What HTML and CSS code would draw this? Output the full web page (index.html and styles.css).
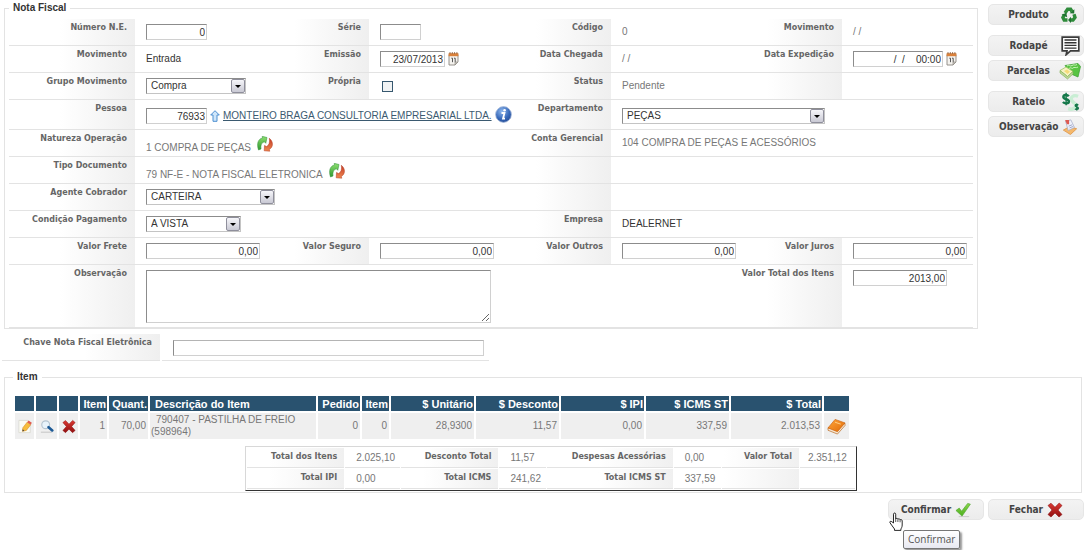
FILE: index.html
```html
<!DOCTYPE html>
<html lang="pt-BR">
<head>
<meta charset="utf-8">
<title>Nota Fiscal</title>
<link rel="stylesheet" href="styles.css">
</head>
<body>
<svg class="defs" aria-hidden="true">
  <defs>
    <linearGradient id="gGreen" x1="0" y1="0" x2="0" y2="1"><stop offset="0" stop-color="#8ee071"/><stop offset="1" stop-color="#2f9a2f"/></linearGradient>
    <linearGradient id="gRed" x1="0" y1="0" x2="0" y2="1"><stop offset="0" stop-color="#c33a26"/><stop offset="1" stop-color="#f08a52"/></linearGradient>
    <linearGradient id="gCross" x1="0" y1="0" x2="0" y2="1"><stop offset="0" stop-color="#dd3a34"/><stop offset="1" stop-color="#8f0f10"/></linearGradient>
    <linearGradient id="gCheck" x1="0" y1="0" x2="0" y2="1"><stop offset="0" stop-color="#8ad84a"/><stop offset="1" stop-color="#4cae1e"/></linearGradient>
    <radialGradient id="gInfo" cx="0.4" cy="0.3" r="0.8"><stop offset="0" stop-color="#8fb8ee"/><stop offset="0.6" stop-color="#3567b8"/><stop offset="1" stop-color="#23468e"/></radialGradient>
    <linearGradient id="gBook" x1="0" y1="0" x2="1" y2="1"><stop offset="0" stop-color="#ffa53a"/><stop offset="1" stop-color="#e06a08"/></linearGradient>
    <symbol id="refresh" viewBox="0 0 16 16">
      <path d="M1.500 14C-.5 8 .8 3 5.500 2L5.200.3 10 1.500 8.800 7.300 7.300 5.800C4.500 6.300 3.500 9.500 4 13z" fill="url(#gGreen)" stroke="#2c8a35" stroke-width=".5"/>
      <path d="M12.300 2.300C16.500 5.500 16.500 11 12.300 13.300L12.800 15.200 7.200 14.800 7.500 9.400 9.500 10.600C12.300 9.300 13 6 12.300 2.300z" fill="url(#gRed)" stroke="#b03a20" stroke-width=".5"/>
    </symbol>
    <symbol id="calendar" viewBox="0 0 11 14">
      <path d="M1 2.500h9v7L7 13H1z" fill="#f4f2ee" stroke="#8b8780" stroke-width=".9"/>
      <path d="M.6 1.200h9.800v3H.6z" fill="#d9803a"/>
      <path d="M2 0v2M4.300 0v2M6.600 0v2M8.900 0v2" stroke="#8a5a3a" stroke-width=".8"/>
      <path d="M3.300 6.200h1.200v4M6 6.200h1.200v4" fill="none" stroke="#444" stroke-width=".9"/>
      <path d="M7 13V10h3z" fill="#c8c4bc" stroke="#8b8780" stroke-width=".6"/>
    </symbol>
    <symbol id="cross" viewBox="0 0 16 16">
      <path d="M1 3.500 4 1.200 8 5.300 12.200 1 15 3.500 11 8 15 12.500 12 15 8 11 4 15 1 12.500 5 8z" fill="url(#gCross)" stroke="#8f1414" stroke-width=".6" stroke-linejoin="round"/>
    </symbol>
  </defs>
</svg>

<div class="top">
  <main class="main">
    <fieldset class="panel">
      <legend>Nota Fiscal</legend>
      <div class="row">
        <label class="lbl" for="numero">Número N.E.</label>
        <div class="val"><input class="num w61" id="numero" value="0"></div>
        <label class="lbl" for="serie">Série</label>
        <div class="val"><input class="w40" id="serie"></div>
        <span class="lbl">Código</span><span class="val ro">0</span>
        <span class="lbl">Movimento</span><span class="val ro">/ /</span>
      </div>
      <div class="row">
        <span class="lbl">Movimento</span><span class="val">Entrada</span>
        <label class="lbl" for="emissao">Emissão</label>
        <div class="val"><input class="num w65" id="emissao" value="23/07/2013"><svg class="cal"><use href="#calendar"/></svg></div>
        <span class="lbl">Data Chegada</span><span class="val ro">/ /</span>
        <label class="lbl" for="expedicao">Data Expedição</label>
        <div class="val"><input class="num w90" id="expedicao" value="/  /    00:00"><svg class="cal"><use href="#calendar"/></svg></div>
      </div>
      <div class="row">
        <label class="lbl" for="grupo">Grupo Movimento</label>
        <div class="val"><span class="select w100"><select id="grupo"><option>Compra</option></select><i class="arrow"></i></span></div>
        <label class="lbl" for="propria">Própria</label>
        <div class="val"><input type="checkbox" id="propria"></div>
        <span class="lbl">Status</span><span class="val ro">Pendente</span>
        <span class="lbl"></span><span class="val"></span>
      </div>
      <div class="row tall">
        <label class="lbl" for="pessoa">Pessoa</label>
        <div class="val span3"><input class="num w61" id="pessoa" value="76933">
          <svg class="up" viewBox="0 0 10 12"><path d="M5 .7 9.300 5H7v6.300H3V5H.7z" fill="#cfe6fa" stroke="#4d8fd0" stroke-linejoin="round"/></svg>
          <a href="#pessoa">MONTEIRO BRAGA CONSULTORIA EMPRESARIAL LTDA.</a>
          <svg class="info" viewBox="0 0 17 17"><circle cx="8.500" cy="8.500" r="7.900" fill="url(#gInfo)" stroke="#a9bddc" stroke-width=".8"/><circle cx="9.600" cy="4.300" r="1.300" fill="#fff"/><path d="M6.500 7h3L8 12.700h2" fill="none" stroke="#fff" stroke-width="1.800"/></svg>
        </div>
        <label class="lbl" for="depto">Departamento</label>
        <div class="val span3"><span class="select w203"><select id="depto"><option>PEÇAS</option></select><i class="arrow"></i></span></div>
      </div>
      <div class="row">
        <span class="lbl">Natureza Operação</span>
        <span class="val ro span3 low">1 COMPRA DE PEÇAS<svg class="ref"><use href="#refresh"/></svg></span>
        <span class="lbl">Conta Gerencial</span><span class="val ro span3">104 COMPRA DE PEÇAS E ACESSÓRIOS</span>
      </div>
      <div class="row">
        <span class="lbl">Tipo Documento</span>
        <span class="val ro span3 low">79 NF-E - NOTA FISCAL ELETRONICA<svg class="ref"><use href="#refresh"/></svg></span>
        <span class="lbl"></span><span class="val span3"></span>
      </div>
      <div class="row">
        <label class="lbl" for="agente">Agente Cobrador</label>
        <div class="val span3"><span class="select w129"><select id="agente"><option>CARTEIRA</option></select><i class="arrow"></i></span></div>
        <span class="lbl"></span><span class="val span3"></span>
      </div>
      <div class="row">
        <label class="lbl" for="condicao">Condição Pagamento</label>
        <div class="val span3"><span class="select w95"><select id="condicao"><option>A VISTA</option></select><i class="arrow"></i></span></div>
        <span class="lbl">Empresa</span><span class="val span3">DEALERNET</span>
      </div>
      <div class="row">
        <label class="lbl" for="frete">Valor Frete</label><div class="val"><input class="num w114" id="frete" value="0,00"></div>
        <label class="lbl" for="seguro">Valor Seguro</label><div class="val"><input class="num w114" id="seguro" value="0,00"></div>
        <label class="lbl" for="outros">Valor Outros</label><div class="val"><input class="num w114" id="outros" value="0,00"></div>
        <label class="lbl" for="juros">Valor Juros</label><div class="val"><input class="num w114" id="juros" value="0,00"></div>
      </div>
      <div class="row">
        <label class="lbl" for="obs">Observação</label>
        <div class="val span5"><textarea id="obs"></textarea></div>
        <label class="lbl" for="total">Valor Total dos Itens</label>
        <div class="val"><input class="num w94" id="total" value="2013,00"></div>
      </div>
    </fieldset>

    <div class="key">
      <label class="lbl" for="chave">Chave Nota Fiscal Eletrônica</label>
      <div class="keyval"><input id="chave"></div>
    </div>
  </main>

  <nav class="side">
    <button class="btn gap" type="button"><span>Produto</span>
      <svg viewBox="0 0 16 16"><g fill="none" stroke="#2e8b3a" stroke-width="3.400"><path d="M4 6 6.600 2.200h3L11 4.500"/><path d="M13 7.200 14 10.500 12 13H9.500"/><path d="M6.500 13H3.200L1.900 10.500 3.500 7.500"/></g><path d="M8.600 6.200 13.200 6.600 13.400 2.200zM10 9.800 7 13 10 16zM.6 7.800 5.300 5.800 6.200 10.200z" fill="#1f7230"/></svg></button>
    <button class="btn" type="button"><span>Rodapé</span>
      <svg class="big" viewBox="0 0 19 20"><path d="M1.200 1.200h16.600v13.600H9.500L5.200 18.600 6 14.800H1.200z" fill="#fff" stroke="#3b3b3b" stroke-width="1.700"/><path d="M3.500 4h12M3.500 6.700h12M3.500 9.400h12M3.500 12.100h12" stroke="#333" stroke-width="1.400"/></svg></button>
    <button class="btn gap" type="button"><span>Parcelas</span>
      <svg class="wide" viewBox="0 0 22 18"><path d="M6 3.500 19 1.500 21.500 4.500 19 15 12 12z" fill="#58c442" stroke="#3a9e30" stroke-width=".7"/><path d="M8 4c2-2 3 1 5-.5s3 .5 5-1M10 6.500c2-2 3 1 4-.5s3 .5 5-1" stroke="#c8f3b8" fill="none"/><path d="M1 8.500 7 5 14 9.500 8.500 14.500z" fill="#f7f3c4" stroke="#9fc66a" stroke-width=".8"/><path d="M1 8.500v2.500L8.500 17l5.500-5V9.500l-5.500 5z" fill="#bfd898" stroke="#7fae50" stroke-width=".6"/><path d="M5 9 8 7.500l3 2.300L8.500 12z" fill="#f5dc7a"/></svg></button>
    <button class="btn tight" type="button"><span>Rateio</span>
      <svg class="big" viewBox="0 0 20 20"><path d="M18 4C13 2 9.500 5 11.500 8.500s6 3.500 4 6.500-5 3-8 2" fill="none" stroke="#c9eed4" stroke-width="3.500"/><path d="M8.200 4C6.500 2 2.500 2.300 2.500 4.700c0 3 5.800 1.800 5.800 4.700 0 2.500-4.300 2.700-6.300.6" fill="none" stroke="#15784a" stroke-width="2.600"/><path d="M5.400.3v13" stroke="#15784a" stroke-width="1.500"/><path d="M18.200 13.300c-1-1-3.200-.8-3.200.6 0 1.600 3.300 1 3.300 2.700 0 1.500-2.400 1.500-3.500.4M16.600 11.500v7.500" fill="none" stroke="#15784a" stroke-width="1.500"/></svg></button>
    <button class="btn" type="button"><span>Observação</span>
      <svg viewBox="0 0 17 18"><path d="M1 12.500 8 8.500l8 2.500-7 6.500z" fill="#f5b86b" stroke="#d98b3b" stroke-width=".8"/><path d="M3.500 2.500 9.500 1l4 8.500L6.500 13z" fill="#eef1fb" stroke="#a5acc8" stroke-width=".8"/><path d="M3 1h4.500v5H5z" fill="#dd5a52"/><path d="M7 8 11 6.500M8 10l4-1.600" stroke="#8f98bd" stroke-width=".9"/></svg></button>
  </nav>
</div>

<fieldset class="panel items">
  <legend>Item</legend>
  <table class="grid">
    <colgroup><col class="c19"><col class="c21"><col class="c19"><col class="c28"><col class="c39"><col class="c165"><col class="c42"><col class="c28"><col class="c83"><col class="c83"><col class="c83"><col class="c83"><col class="c91"><col class="c25"></colgroup>
    <thead><tr><th></th><th></th><th></th><th>Item</th><th>Quant.</th><th class="left">Descrição do Item</th><th>Pedido</th><th>Item</th><th>$ Unitário</th><th>$ Desconto</th><th>$ IPI</th><th>$ ICMS ST</th><th>$ Total</th><th></th></tr></thead>
    <tbody><tr>
      <td class="ic"><button type="button" aria-label="Editar"><svg viewBox="0 0 16 16"><path d="M1 1h10l3 3v11H1z" fill="#fbfbf4" stroke="#cfcfc6" stroke-width=".7"/><path d="M5.500 9.500 10.500 3 14.500 6 9.500 12.500 5 13.500z" fill="#f7bd3c" stroke="#d6902a" stroke-width=".7"/><path d="M10.500 3 12 1l3.800 2.800-1.300 2.200z" fill="#e05c50"/><path d="M5.500 11 5 13.500 7.300 13z" fill="#444"/></svg></button></td>
      <td class="ic"><button type="button" aria-label="Ver"><svg viewBox="0 0 16 16"><path d="M1 14.500h13" stroke="#c6c6c6" stroke-width="1.200"/><circle cx="6.500" cy="6" r="4.500" fill="#e8f3fb" stroke="#b5c4d0" stroke-width="1.300"/><path d="M9.800 8.800 14 12.500" stroke="#1d5a96" stroke-width="3" stroke-linecap="round"/></svg></button></td>
      <td class="ic"><button type="button" aria-label="Excluir"><svg><use href="#cross"/></svg></button></td>
      <td>1</td><td>70,00</td><td class="left desc">790407 - PASTILHA DE FREIO (598964)</td><td>0</td><td>0</td><td>28,9300</td><td>11,57</td><td>0,00</td><td>337,59</td><td>2.013,53</td>
      <td class="ic"><button type="button" aria-label="Detalhes"><svg class="book" viewBox="0 0 20 18"><path d="M1 10.500v2.500L11 17l8-9V5.500z" fill="#f5e6d2" stroke="#b8651a" stroke-width=".7"/><path d="M1 10.500 8.500 1.500 19 5.200 11 14.500z" fill="url(#gBook)" stroke="#c9600c" stroke-width=".7"/><path d="M8.500 4.500l6 2" stroke="#ffd08a"/></svg></button></td>
    </tr></tbody>
  </table>
  <table class="totals">
    <colgroup><col class="t97"><col class="t55"><col class="t97"><col class="t47"><col class="t125"><col class="t47"><col class="t77"><col class="t55"></colgroup>
    <tbody>
    <tr><th>Total dos Itens</th><td>2.025,10</td><th>Desconto Total</th><td>11,57</td><th>Despesas Acessórias</th><td>0,00</td><th>Valor Total</th><td>2.351,12</td></tr>
    <tr><th>Total IPI</th><td>0,00</td><th>Total ICMS</th><td>241,62</td><th>Total ICMS ST</th><td>337,59</td><th></th><td></td></tr>
    </tbody>
  </table>
</fieldset>

<div class="actions">
  <div class="confirm">
    <button class="btn" type="button" aria-describedby="tip"><span>Confirmar</span>
      <svg viewBox="0 0 17 16"><path d="M4 15h11" stroke="#c9c9c9"/><path d="M1 8.500 4.500 6 7 9.300 13.500 1 16.300 1.800 7.500 14.500z" fill="url(#gCheck)" stroke="#4fa52f" stroke-width=".7"/></svg></button>
    <svg class="cursor" viewBox="0 0 15 19"><path d="M4.500 11V2.200c0-1.600 2.200-1.600 2.200 0V7c.3-1 2-.9 2.200.3.500-.8 2-.6 2.200.5.600-.6 2-.3 2.100 1V13c0 2-.8 3-1.300 4v1.400H5.500V17C4 15 2.500 13 1 10.800.3 9.500 1.800 8.700 2.800 9.700z" fill="#fff" stroke="#111" stroke-width=".9" stroke-linejoin="round"/><path d="M6.700 7v3M8.900 7.500V10M11.100 8v2.300" stroke="#111" stroke-width=".7"/></svg>
    <div class="tip" id="tip" role="tooltip">Confirmar</div>
  </div>
  <button class="btn" type="button"><span>Fechar</span><svg><use href="#cross"/></svg></button>
</div>
</body>
</html>
```
FILE: styles.css
```css
* { box-sizing: border-box; }
body { margin: 0; padding: 2px 4px 0; background: #fff; color: #333; font: 10px/12px "Liberation Sans", Arial, sans-serif; }
.defs { position: absolute; width: 0; height: 0; }
svg { flex: none; display: block; width: 16px; height: 16px; }
input, select, textarea, button { margin: 0; font: inherit; color: inherit; }

.top { display: flex; align-items: flex-start; gap: 10px; }
.main { flex: 1; min-width: 0; }
.panel { margin: 0; padding: 5px 4px 0; border: 1px solid #e3e3e3; min-width: 0; }
.panel legend { padding: 0 4px; font-weight: bold; }

/* Form rows: four label/value pairs */
.row { display: grid; grid-template-columns: minmax(0, 126fr) minmax(0, 160fr) minmax(0, 74fr) minmax(0, 160fr) minmax(0, 82fr) minmax(0, 146fr) minmax(0, 85fr) minmax(0, 131fr); min-height: 27px; border-bottom: 1px solid #e3e3e3; }
.row.tall { min-height: 30px; }
.span3 { grid-column: span 3; }
.span5 { grid-column: span 5; }
.lbl { display: flex; justify-content: flex-end; padding: 3px 8px 0 0; white-space: nowrap; color: #666; font: bold 8px/12px "DejaVu Sans", Verdana, sans-serif; background: linear-gradient(to right, #fff, #efefef) right / 75px 100% no-repeat; }
.val { display: flex; align-items: center; align-self: start; gap: 3px; min-height: 16px; margin-top: 5px; padding-left: 11px; white-space: nowrap; }
.tall .val { margin-top: 8px; }
.ro { color: #777; }
.low { padding-top: 1px; align-items: flex-end; }
.low .ref { margin: 0 0 2px 3px; }
.val a { color: #3b5a70; }

input, textarea { height: 16px; padding: 0 1px; border: 1px solid; border-color: #8c8c8c #d0d0d0 #d0d0d0 #8c8c8c; background: #fff; white-space: pre; }
.num { text-align: right; }
.w40 { width: 41px; }
.w61 { width: 61px; }
.w65 { width: 65px; }
.w90 { width: 90px; }
.w94 { width: 94px; }
.w114 { width: 114px; }
textarea { display: block; width: 345px; height: 53px; margin-bottom: 4px; resize: both; }
input[type="checkbox"] { appearance: none; width: 11px; height: 11px; margin-left: 2px; border: 1px solid #37586f; background: #f1f3f4; }

.select { display: grid; align-items: center; }
.select select { grid-area: 1 / 1; width: 100%; height: 16px; padding: 0 18px 0 4px; appearance: none; background: #fff; border: 1px solid; border-color: #8c8c8c #c4c4c4 #c4c4c4 #8c8c8c; border-radius: 0; }
.arrow { grid-area: 1 / 1; justify-self: end; display: grid; place-items: center; width: 14px; height: 14px; margin-right: 1px; pointer-events: none; border: 1px solid #8f8f9c; border-radius: 2px; background: linear-gradient(#f6f6fa, #c9c9d4); }
.arrow::after { content: ""; border: 3px solid transparent; border-top-color: #000; border-bottom: 0; }
.w95 { width: 95px; }
.w100 { width: 100px; }
.w129 { width: 129px; }
.w203 { width: 203px; }

.cal { width: 11px; height: 14px; }
.up { width: 10px; height: 12px; }
.info { width: 17px; height: 17px; margin-top: -3px; }

.key { display: flex; gap: 2px; margin: 5px 0 0 -2px; }
.key .lbl { flex: 0 0 158px; height: 27px; border-bottom: 1px solid #e3e3e3; }
.keyval { flex: 0 1 327px; padding: 6px 5px 4px 11px; border-bottom: 1px solid #e3e3e3; }
.keyval input { display: block; width: 100%; border-color: #b4b4b4 #d0d0d0 #d0d0d0 #8c8c8c; }

.side { display: flex; flex-direction: column; gap: 4px; padding-top: 2px; }
.btn { display: flex; align-items: center; gap: 3px; width: 96px; height: 21px; padding: 0 6px 0 10px; color: #444; border: 1px solid #e6e6e6; border-radius: 5px; background: linear-gradient(#f3f3f3, #ececec); font: bold 10px/14px "DejaVu Sans Condensed", Tahoma, sans-serif; }
.btn span { flex: 1; text-align: center; }
.btn.gap { margin-bottom: 6px; }
.btn .big { width: 19px; height: 20px; margin-right: -3px; }
.btn .wide { width: 22px; height: 18px; margin: 0 -4px 0 -2px; }

/* Items */
.items { margin: 10px 2px 0 0; padding: 11px 8px 1px; }
.grid { border-spacing: 2px; table-layout: fixed; width: 838px; max-width: 100%; }
.grid th { padding: 0 1px; height: 15px; text-align: right; color: #fff; background: #29526f; white-space: nowrap; font-size: 11px; }
.grid td { padding: 0 2px; height: 26px; text-align: right; color: #777; background: #efefef; }
.grid .left { text-align: left; padding-left: 5px; }
.grid .desc { padding: 0 20px 0 1px; text-indent: 5px; }
.grid .ic { padding: 0; }
.ic button { display: flex; justify-content: center; width: 100%; padding: 0; border: 0; background: none; }
.ic svg { width: 14px; height: 15px; }
.ic .book { width: 19px; height: 17px; }
.c19 { width: 19px; }
.c21 { width: 21px; }
.c25 { width: 25px; }
.c28 { width: 27px; }
.c39 { width: 39px; }
.c42 { width: 42px; }
.c83 { width: 83px; }
.c91 { width: 91px; }

.totals { table-layout: fixed; width: 612px; margin: 5px 0 0 232px; border: 1px solid; border-color: #d8d8d8 #333 #333 #d8d8d8; border-spacing: 1px; }
.totals th, .totals td { height: 20px; padding: 0; border-bottom: 1px solid #e3e3e3; }
.totals th { padding: 0 7px 2px 0; text-align: right; white-space: nowrap; color: #666; font: bold 8px/12px "DejaVu Sans", Verdana, sans-serif; background: linear-gradient(to right, #fff, #f0f0f0) right / 75px 100% no-repeat; }
.totals td { padding-left: 11px; color: #777; }
.totals td:last-child { padding-left: 8px; }
.t47 { width: 47px; }
.t55 { width: 55px; }
.t77 { width: 77px; }
.t97 { width: 97px; }
.t125 { width: 125px; }

.actions { display: flex; align-items: flex-start; justify-content: flex-end; gap: 4px; min-height: 51px; margin-top: 6px; }
.actions .btn { justify-content: center; gap: 4px; padding: 0; }
.actions .btn span { flex: none; }
.confirm { position: relative; }
.cursor { position: absolute; left: 1px; top: 13px; width: 15px; height: 19px; }
.tip { position: absolute; left: 15px; top: 31px; padding: 2px 4px; color: #555; border: 1px solid #767676; border-radius: 2px; background: linear-gradient(#fff, #e8e9f2); box-shadow: 2px 2px 2px #999; font: 10px/13px "Open Sans", "Segoe UI", sans-serif; }
```
